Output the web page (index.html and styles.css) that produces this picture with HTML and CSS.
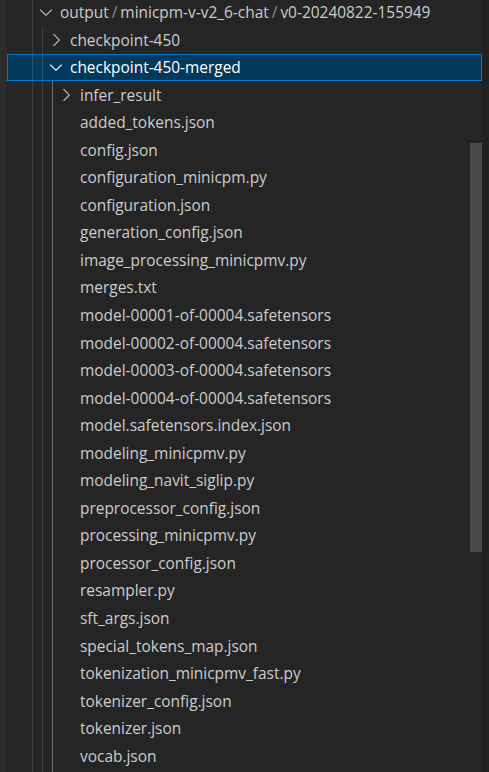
FILE: index.html
```html
<!DOCTYPE html>
<html>
<head>
<meta charset="utf-8">
<link rel="stylesheet" href="styles.css">
</head>
<body>
<div class="pane">
  <div class="edge-left"></div>
  <div class="tree">
    <div class="row"><span class="guides"><i class="g"></i></span><span class="tw"><svg viewBox="0 0 16 16"><path d="M7.976 10.072l4.357-4.357.62.618L8.284 11h-.618L3 6.333l.619-.618 4.357 4.357z"/></svg></span><span class="label">output<span class="sep">/</span>minicpm-v-v2_6-chat<span class="sep">/</span>v0-20240822-155949</span></div>
    <div class="row"><span class="guides"><i class="g"></i><i class="g"></i></span><span class="tw"><svg viewBox="0 0 16 16"><path d="M10.072 8.024L5.715 3.667l.618-.62L11 7.716v.618L6.333 13l-.618-.619 4.357-4.357z"/></svg></span><span class="label">checkpoint-450</span></div>
    <div class="row selected"><span class="guides"><i class="g"></i><i class="g"></i></span><span class="tw"><svg viewBox="0 0 16 16"><path d="M7.976 10.072l4.357-4.357.62.618L8.284 11h-.618L3 6.333l.619-.618 4.357 4.357z"/></svg></span><span class="label">checkpoint-450-merged</span></div>
    <div class="row"><span class="guides"><i class="g"></i><i class="g"></i><i class="g active"></i></span><span class="tw"><svg viewBox="0 0 16 16"><path d="M10.072 8.024L5.715 3.667l.618-.62L11 7.716v.618L6.333 13l-.618-.619 4.357-4.357z"/></svg></span><span class="label">infer_result</span></div>
    <div class="row"><span class="guides"><i class="g"></i><i class="g"></i><i class="g active"></i></span><span class="tw"></span><span class="label">added_tokens.json</span></div>
    <div class="row"><span class="guides"><i class="g"></i><i class="g"></i><i class="g active"></i></span><span class="tw"></span><span class="label">config.json</span></div>
    <div class="row"><span class="guides"><i class="g"></i><i class="g"></i><i class="g active"></i></span><span class="tw"></span><span class="label">configuration_minicpm.py</span></div>
    <div class="row"><span class="guides"><i class="g"></i><i class="g"></i><i class="g active"></i></span><span class="tw"></span><span class="label">configuration.json</span></div>
    <div class="row"><span class="guides"><i class="g"></i><i class="g"></i><i class="g active"></i></span><span class="tw"></span><span class="label">generation_config.json</span></div>
    <div class="row"><span class="guides"><i class="g"></i><i class="g"></i><i class="g active"></i></span><span class="tw"></span><span class="label">image_processing_minicpmv.py</span></div>
    <div class="row"><span class="guides"><i class="g"></i><i class="g"></i><i class="g active"></i></span><span class="tw"></span><span class="label">merges.txt</span></div>
    <div class="row"><span class="guides"><i class="g"></i><i class="g"></i><i class="g active"></i></span><span class="tw"></span><span class="label">model-00001-of-00004.safetensors</span></div>
    <div class="row"><span class="guides"><i class="g"></i><i class="g"></i><i class="g active"></i></span><span class="tw"></span><span class="label">model-00002-of-00004.safetensors</span></div>
    <div class="row"><span class="guides"><i class="g"></i><i class="g"></i><i class="g active"></i></span><span class="tw"></span><span class="label">model-00003-of-00004.safetensors</span></div>
    <div class="row"><span class="guides"><i class="g"></i><i class="g"></i><i class="g active"></i></span><span class="tw"></span><span class="label">model-00004-of-00004.safetensors</span></div>
    <div class="row"><span class="guides"><i class="g"></i><i class="g"></i><i class="g active"></i></span><span class="tw"></span><span class="label">model.safetensors.index.json</span></div>
    <div class="row"><span class="guides"><i class="g"></i><i class="g"></i><i class="g active"></i></span><span class="tw"></span><span class="label">modeling_minicpmv.py</span></div>
    <div class="row"><span class="guides"><i class="g"></i><i class="g"></i><i class="g active"></i></span><span class="tw"></span><span class="label">modeling_navit_siglip.py</span></div>
    <div class="row"><span class="guides"><i class="g"></i><i class="g"></i><i class="g active"></i></span><span class="tw"></span><span class="label">preprocessor_config.json</span></div>
    <div class="row"><span class="guides"><i class="g"></i><i class="g"></i><i class="g active"></i></span><span class="tw"></span><span class="label">processing_minicpmv.py</span></div>
    <div class="row"><span class="guides"><i class="g"></i><i class="g"></i><i class="g active"></i></span><span class="tw"></span><span class="label">processor_config.json</span></div>
    <div class="row"><span class="guides"><i class="g"></i><i class="g"></i><i class="g active"></i></span><span class="tw"></span><span class="label">resampler.py</span></div>
    <div class="row"><span class="guides"><i class="g"></i><i class="g"></i><i class="g active"></i></span><span class="tw"></span><span class="label">sft_args.json</span></div>
    <div class="row"><span class="guides"><i class="g"></i><i class="g"></i><i class="g active"></i></span><span class="tw"></span><span class="label">special_tokens_map.json</span></div>
    <div class="row"><span class="guides"><i class="g"></i><i class="g"></i><i class="g active"></i></span><span class="tw"></span><span class="label">tokenization_minicpmv_fast.py</span></div>
    <div class="row"><span class="guides"><i class="g"></i><i class="g"></i><i class="g active"></i></span><span class="tw"></span><span class="label">tokenizer_config.json</span></div>
    <div class="row"><span class="guides"><i class="g"></i><i class="g"></i><i class="g active"></i></span><span class="tw"></span><span class="label">tokenizer.json</span></div>
    <div class="row"><span class="guides"><i class="g"></i><i class="g"></i><i class="g active"></i></span><span class="tw"></span><span class="label">vocab.json</span></div>
    <div class="row"><span class="guides"><i class="g"></i><i class="g"></i><i class="g active"></i></span><span class="tw"></span><span class="label"></span></div>
    <div class="scrollbar"></div>
  </div>
  <div class="edge-right"></div>
</div>
</body>
</html>
```

FILE: styles.css
```css
html, body {
  margin: 0;
  padding: 0;
  background: #252526;
  overflow: hidden;
}

.pane {
  display: flex;
  width: 489px;
  height: 772px;
  overflow: hidden;
  font-family: "Open Sans", "Noto Sans", sans-serif;
  font-size: 15.45px;
  color: #cccccc;
}

.edge-left {
  width: 7px;
  flex: none;
  background: #2c2c2c;
}

.edge-right {
  width: 7px;
  flex: none;
  background: #212121;
}

.tree {
  position: relative;
  flex: 1;
  margin-top: -1.5px;
}

.row {
  display: flex;
  align-items: center;
  height: 27.55px;
  padding-left: 25px;
  box-sizing: border-box;
  white-space: nowrap;
}

.row.selected {
  background: #04395e;
  outline: 1px solid #0078d4;
  outline-offset: -1px;
  color: #ffffff;
}

.guides {
  display: flex;
  align-self: stretch;
}

.g {
  display: block;
  width: 10px;
  box-sizing: border-box;
  border-left: 1px solid #404040;
}

.selected .g {
  border-left-color: #2a5273;
}

.g.active {
  border-left-color: #707070;
}

.tw {
  display: flex;
  align-items: center;
  justify-content: center;
  width: 20px;
  height: 20px;
  margin-left: -6px;
  margin-right: 4px;
  flex: none;
}

.tw svg {
  width: 20px;
  height: 20px;
  fill: #c5c5c5;
}

.selected .tw svg {
  fill: #ffffff;
}

.label {
  line-height: 27.55px;
  padding-top: 1px;
}

.sep {
  color: #8c8c8c;
  padding: 0 3px;
}

.scrollbar {
  position: absolute;
  left: 463px;
  top: 144.5px;
  width: 12px;
  height: 409px;
  background: #4a4a4a;
}
```
